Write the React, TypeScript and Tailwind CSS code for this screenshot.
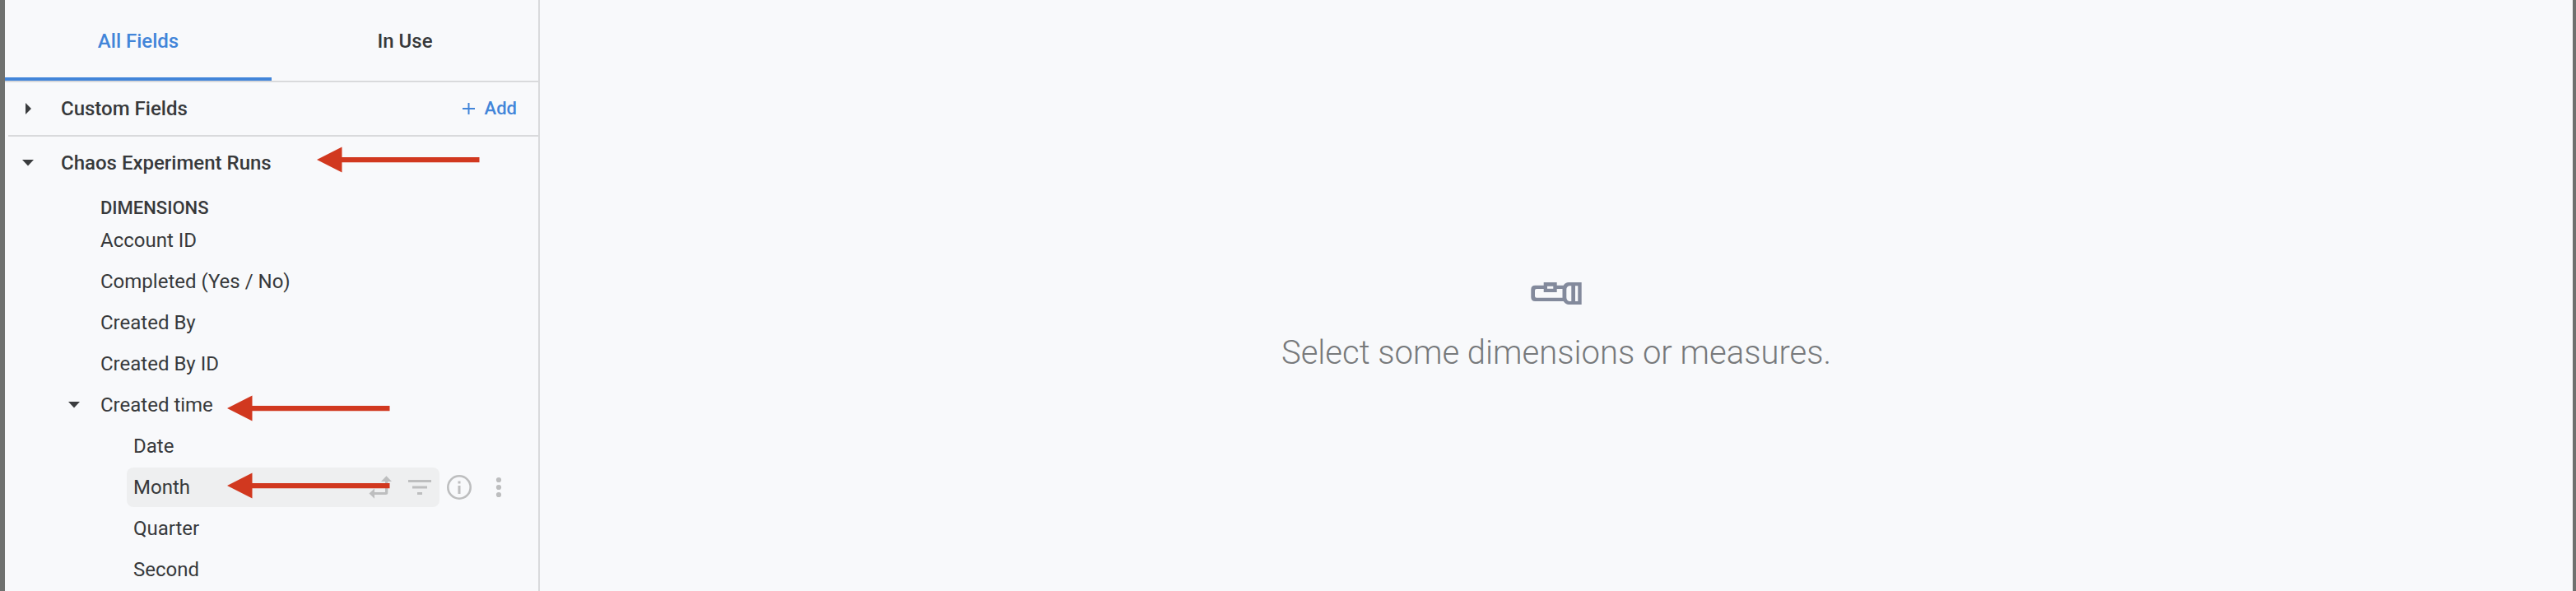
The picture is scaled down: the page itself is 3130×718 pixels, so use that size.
import React from 'react';

const fields = ['Account ID', 'Completed (Yes / No)', 'Created By', 'Created By ID'];

function RedArrow({ className }: { className: string }) {
  return (
    <svg className={`absolute ${className}`} width="200" height="32" viewBox="0 0 200 32" fill="#d1381f">
      <path d="M0 16 30.500 .5v31zM30 13h167.500v6.200H30z" />
    </svg>
  );
}

function CaretDown() {
  return (
    <svg width="14" height="8" viewBox="0 0 14 8" fill="#3a3c3e">
      <path d="M0 0h14L7 7.5z" />
    </svg>
  );
}

function Row({ children, indent }: { children: React.ReactNode; indent: string }) {
  return <div className={`flex h-[50px] items-center ${indent}`}>{children}</div>;
}

function MonthRow() {
  return (
    <div className="relative flex h-[50px] items-center pl-[148px]">
      <div className="flex h-12 w-[380px] items-center rounded-lg bg-[#eeeff0] pl-2 pr-[10px]">
        <span className="grow">Month</span>
        <svg className="mr-5" width="28" height="28" viewBox="448 578 28 28" fill="#bdbebf">
          <path d="M469.500 578.300 476 585h-4.700v13.500q0 2.500-2.500 2.500H455v4.700L448.500 599.500 455 593.500V598h13v-13h-5z" />
        </svg>
        <svg width="28" height="18" viewBox="0 0 28 18" fill="#bdbebf">
          <path d="M0 0h28v3H0zM5 7.500h18v3H5zM11 15h6v3h-6z" />
        </svg>
      </div>
      <svg className="ml-2" width="32" height="32" viewBox="0 0 32 32" fill="#bdbebf">
        <circle cx="16" cy="16" r="13.700" fill="none" stroke="#bdbebf" strokeWidth="2.600" />
        <path d="M14.500 8.500h3v3h-3zM14.500 14h3v10h-3z" />
      </svg>
      <svg className="ml-[28px]" width="8" height="26" viewBox="0 0 8 26" fill="#bdbebf">
        <circle cx="4" cy="4" r="3.100" />
        <circle cx="4" cy="13" r="3.100" />
        <circle cx="4" cy="22" r="3.100" />
      </svg>
      <RedArrow className="left-[270px] top-[7px]" />
    </div>
  );
}

export default function App() {
  return (
    <div className="flex h-[718px] w-[3130px] overflow-hidden border-l-[6px] border-r-4 border-[#6f716f] bg-[#f8f9fb] font-['Roboto',sans-serif] text-2xl text-[#37393b]">
      <aside className="h-full w-[650px] shrink-0 border-r-2 border-[#d9dadc]">
        <div className="flex h-[100px] border-b-2 border-[#d9dadc] font-medium">
          <div className="flex w-[324px] items-center justify-center border-b-4 border-[#4285d9] pt-[6px] text-[#4285d9]">All Fields</div>
          <div className="flex w-[324px] items-center justify-center pt-[2px]">In Use</div>
        </div>
        <div className="ml-1 flex h-[66px] items-center border-b-2 border-[#d9dadc] font-medium">
          <svg className="ml-[21px]" width="7" height="14" viewBox="0 0 7 14" fill="#3a3c3e">
            <path d="M0 0v14l7-7z" />
          </svg>
          <span className="ml-9 grow">Custom Fields</span>
          <svg className="mr-[12px]" width="15" height="14" viewBox="0 0 15 14" fill="#4285d9">
            <path d="M6.500 0h2v6H15v2H8.500v6h-2V8H0V6h6.500z" />
          </svg>
          <span className="mr-[26px] text-[22px] text-[#4285d9]">Add</span>
        </div>
        <div className="relative flex h-16 items-center pl-[21px] font-medium">
          <CaretDown />
          <span className="ml-[33px]">Chaos Experiment Runs</span>
          <RedArrow className="left-[379px] top-[12px]" />
        </div>
        <div className="flex h-[37px] items-center pl-[116px] pt-[9px] text-[22px] font-medium">DIMENSIONS</div>
        {fields.map((name) => (
          <Row key={name} indent="pl-[116px]">{name}</Row>
        ))}
        <div className="relative flex h-[50px] items-center pl-[77px]">
          <CaretDown />
          <span className="ml-[25px]">Created time</span>
          <RedArrow className="left-[270px] top-[13px]" />
        </div>
        <Row indent="pl-[156px]">Date</Row>
        <MonthRow />
        <Row indent="pl-[156px]">Quarter</Row>
        <Row indent="pl-[156px]">Second</Row>
      </aside>
      <main className="flex grow flex-col items-center pt-[343px]">
        <svg width="62" height="28" viewBox="0 0 62 28" fill="#838a9c" fillRule="evenodd">
          <path d="M15.700 3.700V0h16v3.700h8Q42 0 46 0h15.700v27H46q-3.500 0-6.300-4H5.300q-5 0-5-5V8.700q0-5 5-5zM15.700 8H7Q5 8 5 10v6.700q0 2 2 2h31.500V8h-6.800v4h-16zM20 4.700v3h7.300v-3zM49.300 4.300H46.500Q43.300 5.500 43.300 9v9q0 4 3.200 5h2.800zM54 4.300V23h3.300V4.300z" />
        </svg>
        <div className="mt-[34px] text-[40px] font-light leading-[48px] text-[#77797b]">Select some dimensions or measures.</div>
      </main>
    </div>
  );
}
